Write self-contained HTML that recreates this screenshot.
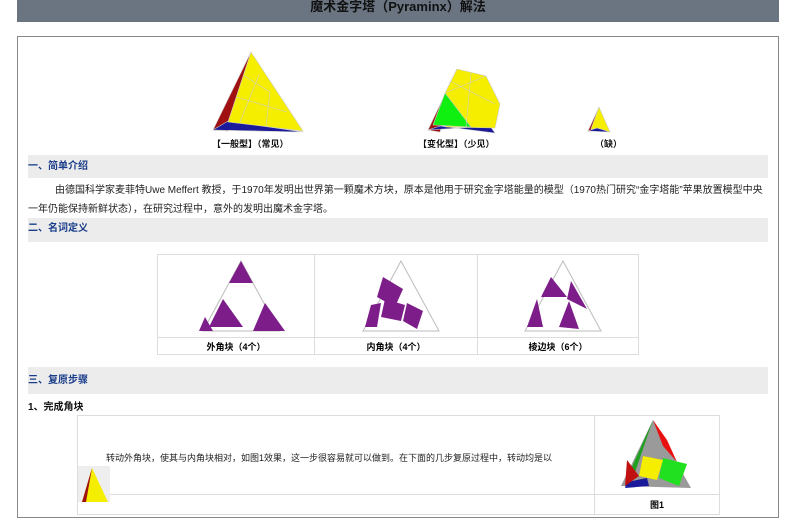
<!DOCTYPE html>
<html><head><meta charset="utf-8"><style>
body{margin:0;width:794px;height:500px;overflow:hidden;background:#fff;font-family:"Liberation Sans","Noto Sans CJK SC",sans-serif;position:relative}
.a{position:absolute}
.hd{left:17px;top:0;width:762px;height:22px;background:#6b7582;color:#111;font-size:13px;font-weight:bold;text-align:center;line-height:14px}
.box{left:17px;top:36px;width:760px;height:480px;border:1px solid #888}
.bar{left:28px;width:740px;background:#ececec;color:#1a3d8a;font-size:10px;font-weight:bold;padding-left:0}
.t{font-size:10px;color:#222}
.cap{font-size:9px;font-weight:bold;color:#111}
td{border:1px solid #ddd;padding:0;text-align:center;font-size:9px;font-weight:bold}
table{border-collapse:collapse}
</style></head><body>
<div class="a hd">魔术金字塔（Pyraminx）解法</div>
<div class="a box"></div>
<svg class="a" style="left:0;top:0" width="794" height="500">
<g stroke="#ccc" stroke-width="0.6">
<polygon points="251,52 213,130 228,131" fill="#a01010"/>
<polygon points="213,130 228,121 303,132" fill="#1a1a9a"/>
<polygon points="251,52 228,122 303,131" fill="#f5ee00"/>
<line x1="243" y1="75" x2="270" y2="92" /><line x1="236" y1="97" x2="287" y2="112"/><line x1="259" y1="75" x2="240" y2="122"/><line x1="270" y1="92" x2="266" y2="126"/>
<polygon points="457,69 428,130 440,132" fill="#a01010"/>
<polygon points="428,130 440,126 495,133 490,126" fill="#1a1a9a"/>
<polygon points="457,69 486,76 500,104 495,128 446,127 445,93" fill="#f5ee00"/>
<polygon points="445,93 433,125 471,127" fill="#10f010"/>
<line x1="450" y1="81" x2="495" y2="104"/><line x1="471" y1="73" x2="466" y2="127"/><line x1="445" y1="93" x2="486" y2="76"/>
<polygon points="599,107 588,131 591,131" fill="#a01010"/>
<polygon points="599,107 591,129 610,132" fill="#f5ee00"/>
<polygon points="588,131 610,132 597,128" fill="#1a1a9a"/>
</g>
</svg>
<div class="a cap" style="left:212px;top:137px">【一般型】（常见）</div>
<div class="a cap" style="left:418px;top:137px">【变化型】（少见）</div>
<div class="a cap" style="left:595px;top:137px">（缺）</div>
<div class="a bar" style="top:155px;height:23px;line-height:23px">一、简单介绍</div>
<div class="a t" style="left:28px;top:181px;width:740px;line-height:19px;text-indent:27px">由德国科学家麦菲特Uwe Meffert 教授，于1970年发明出世界第一颗魔术方块，原本是他用于研究金字塔能量的模型（1970热门研究“金字塔能”苹果放置模型中央一年仍能保持新鲜状态），在研究过程中，意外的发明出魔术金字塔。</div>
<div class="a bar" style="top:218px;height:24px;line-height:22px">二、名词定义</div>
<table class="a" style="left:157px;top:254px;width:482px;height:101px">
<tr style="height:82px"><td style="width:156px"><svg width="150" height="80"><polygon points="80,6 42,76 118,76" fill="none" stroke="#bbb"/><polygon points="80,6 68,28 92,28" fill="#7d1d8a"/><polygon points="62,44 48,72 82,72" fill="#7d1d8a"/><polygon points="104,48 92,76 124,76" fill="#7d1d8a"/><polygon points="44,62 38,76 52,76" fill="#7d1d8a"/></svg></td>
<td style="width:162px"><svg width="150" height="80"><polygon points="80,6 42,76 118,76" fill="none" stroke="#bbb"/><polygon points="62,22 82,34 74,52 56,42" fill="#7d1d8a"/><polygon points="64,44 84,50 80,66 60,62" fill="#7d1d8a"/><polygon points="86,48 102,56 96,74 82,66" fill="#7d1d8a"/><polygon points="50,50 60,48 56,72 44,72" fill="#7d1d8a"/></svg></td>
<td><svg width="150" height="80"><polygon points="80,6 42,76 118,76" fill="none" stroke="#bbb"/><polygon points="68,22 84,42 58,42" fill="#7d1d8a"/><polygon points="88,26 104,54 84,44" fill="#7d1d8a"/><polygon points="86,46 96,74 76,72" fill="#7d1d8a"/><polygon points="54,44 60,72 44,72" fill="#7d1d8a"/></svg></td></tr>
<tr><td>外角块（4个）</td><td>内角块（4个）</td><td>棱边块（6个）</td></tr>
</table>
<div class="a bar" style="top:367px;height:27px;line-height:27px">三、复原步骤</div>
<div class="a" style="left:28px;top:398px;font-size:10px;font-weight:bold;color:#111">1、完成角块</div>
<table class="a" style="left:77px;top:415px;width:643px;height:100px">
<tr style="height:78px"><td style="text-align:left;font-weight:normal;vertical-align:top;position:relative"><div style="position:absolute;left:28px;top:35px;font-size:9px;color:#222">转动外角块，使其与内角块相对，如图1效果，这一步很容易就可以做到。在下面的几步复原过程中，转动均是以</div>
<svg style="position:absolute;left:0;top:50px" width="32" height="36"><rect width="32" height="36" fill="#eee"/><polygon points="14,2 4,36 30,36" fill="#f5ee00"/><polygon points="14,2 4,36 8,36" fill="#a01010"/></svg></td>
<td style="width:124px"><svg width="120" height="76"><polygon points="56,4 24,70 94,72" fill="#9a9a9a"/><polygon points="56,4 70,24 80,46 66,30" fill="#e81010"/><polygon points="66,42 90,48 82,70 62,62" fill="#20e020"/><polygon points="46,40 66,44 60,64 42,60" fill="#f5ee00"/><polygon points="56,4 30,62 36,62" fill="#20a020"/><polygon points="30,66 50,62 52,70 28,72" fill="#1a1a9a"/><polygon points="30,44 42,60 28,70" fill="#c01010"/></svg></td></tr>
<tr><td></td><td>图1</td></tr>
</table>
</body></html>
